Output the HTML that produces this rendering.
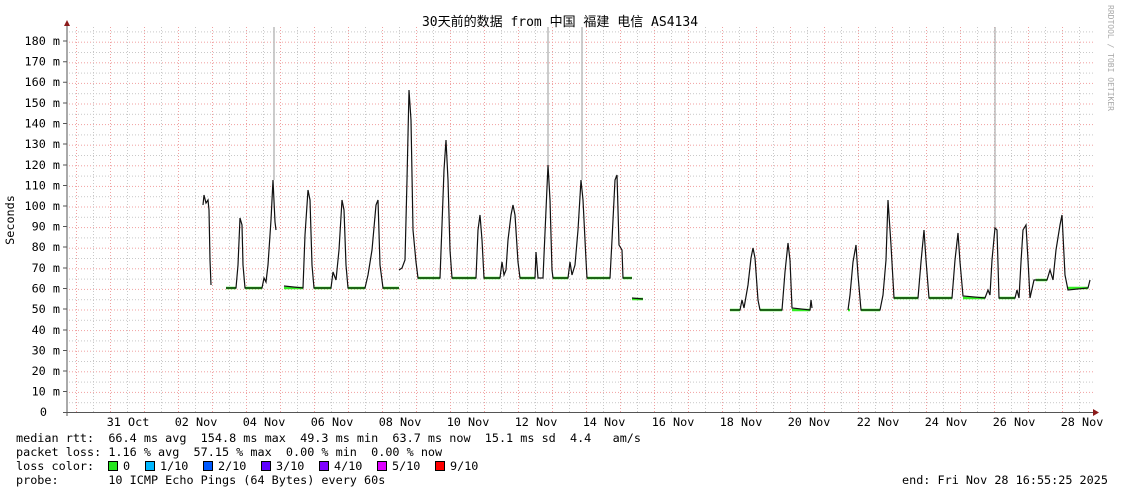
<!DOCTYPE html>
<html><head><meta charset="utf-8"><style>
body{margin:0;background:#fff;width:1121px;height:494px;overflow:hidden;position:relative;font-family:"DejaVu Sans Mono","Liberation Mono","Noto Sans CJK SC",monospace;font-size:11.8px;color:#000}
.t{position:absolute;white-space:pre;line-height:14px}
.b{position:absolute;width:8px;height:8px;border:1px solid #000}
</style></head><body>
<svg width="1121" height="494" style="position:absolute;left:0;top:0">
<defs>
<pattern id="vg" patternUnits="userSpaceOnUse" x="76" y="0" width="34" height="3">
<rect x="0" y="0" width="1" height="1" fill="#f0a0a0"/><rect x="17" y="0" width="1" height="1" fill="#c8c8c8"/></pattern>
<pattern id="hg" patternUnits="userSpaceOnUse" x="0" y="412.5" width="3" height="20.6">
<rect x="0" y="0" width="1" height="1" fill="#f0a0a0"/><rect x="0" y="10.3" width="1" height="1" fill="#c8c8c8"/></pattern>
</defs>
<rect x="68" y="27" width="1025" height="385" fill="url(#hg)"/>
<rect x="68" y="27" width="1025" height="385" fill="url(#vg)"/>
<g stroke="#bbb" stroke-width="1.5">
<line x1="274" y1="27" x2="274" y2="180"/><line x1="548" y1="27" x2="548" y2="165"/><line x1="582" y1="27" x2="582" y2="180"/><line x1="995" y1="27" x2="995" y2="228"/>
</g>
<g stroke="#33ee22" stroke-width="2.5">
<path d="M226,288H236M245,288H262M284,288H303M314,288H331M348,288H365M383,288H399M418,278H440M452,278H476M484,278H500M520,278H535M553,278H568M587,278H610M623,278H632M632,299H643M730,310H740M760,310H782M792,310H810M848,310H850M861,310H880M894,298H918M929,298H952M963,298H985M999,298H1015M1036,280H1047M1068,288H1088"/>
</g>
<g fill="none" stroke="#111" stroke-width="1.2">
<path d="M203,205 L204,195 L206,203 L208,200 L209,210 L210,260 L211,285"/>
<path d="M226,288 L236,288 L238,265 L240,218 L242,225 L243,265 L245,288 L262,288 L264,278 L266,282 L268,265 L271,220 L273,180 L275,222 L276,230"/>
<path d="M284,286 L303,288 L305,235 L308,190 L310,200 L312,265 L314,288 L331,288 L333,272 L336,280 L339,250 L342,200 L344,210 L346,265 L348,288 L365,288 L368,275 L372,250 L376,205 L378,200 L380,265 L383,288 L399,288"/>
<path d="M399,270 L402,268 L405,260 L407,180 L409,90 L411,120 L413,230 L416,262 L418,278 L440,278 L442,225 L444,170 L446,140 L448,180 L450,250 L452,278 L476,278 L478,230 L480,215 L482,240 L484,278 L500,278 L502,262 L504,275 L506,270 L508,240 L511,215 L513,205 L515,215 L518,262 L520,278 L535,278 L536,252 L538,278 L543,278 L546,210 L548,165 L550,200 L552,270 L553,278 L568,278 L570,262 L572,275 L575,265 L578,230 L581,180 L583,200 L586,260 L587,278 L610,278 L612,240 L615,180 L617,175 L619,245 L622,250 L623,278 L632,278"/>
<path d="M632,298 L643,299"/>
<path d="M730,310 L740,310 L742,300 L744,308 L748,285 L751,258 L753,248 L755,258 L758,300 L760,310 L782,310 L785,272 L788,243 L790,260 L792,308 L810,310 L811,300 L812,308"/>
<path d="M848,310 L850,295 L853,262 L856,245 L858,275 L861,310 L880,310 L883,295 L886,260 L888,200 L891,245 L894,298 L918,298 L921,262 L924,230 L926,260 L929,298 L952,298 L955,260 L958,233 L960,262 L963,296 L985,298 L988,290 L990,295 L992,260 L995,228 L997,230 L999,298 L1015,298 L1017,290 L1019,298 L1021,262 L1023,230 L1026,225 L1028,260 L1030,298 L1034,280 L1036,280 L1047,280 L1050,270 L1053,280 L1056,250 L1060,225 L1062,215 L1065,275 L1068,290 L1088,288 L1090,280"/>
</g>
<line x1="67" y1="24" x2="67" y2="416" stroke="#555" stroke-width="1"/>
<line x1="63" y1="412.5" x2="1094" y2="412.5" stroke="#555" stroke-width="1"/>
<polygon points="64,26 70,26 67,20" fill="#8b1a1a"/>
<polygon points="1093,409 1093,416 1099,412.5" fill="#8b1a1a"/>
<g stroke="#555"><path d="M63,41H67M63,61.7H67M63,82.3H67M63,103H67M63,123.5H67M63,144H67M63,165H67M63,185.5H67M63,206H67M63,226.5H67M63,247H67M63,268H67M63,288.5H67M63,309H67M63,330H67M63,350.5H67M63,371H67M63,391.5H67"/></g>
<text x="560" y="26" text-anchor="middle" font-family="DejaVu Sans Mono,Noto Sans CJK SC,monospace" font-size="13">30天前的数据 from 中国 福建 电信 AS4134</text>
<text transform="translate(14,220) rotate(-90)" text-anchor="middle" font-size="11.8" font-family="DejaVu Sans Mono,monospace">Seconds</text>
<text transform="translate(1108,5) rotate(90)" font-size="8" fill="#aaa" font-family="DejaVu Sans Mono,monospace">RRDTOOL / TOBI OETIKER</text>
<g font-size="11.8" font-family="DejaVu Sans Mono,monospace" text-anchor="middle">
<text x="128" y="426">31 Oct</text><text x="196" y="426">02 Nov</text><text x="264" y="426">04 Nov</text><text x="332" y="426">06 Nov</text><text x="400" y="426">08 Nov</text><text x="468" y="426">10 Nov</text><text x="536" y="426">12 Nov</text><text x="604" y="426">14 Nov</text><text x="673" y="426">16 Nov</text><text x="741" y="426">18 Nov</text><text x="809" y="426">20 Nov</text><text x="878" y="426">22 Nov</text><text x="946" y="426">24 Nov</text><text x="1014" y="426">26 Nov</text><text x="1082" y="426">28 Nov</text>
</g>
<g font-size="11.8" font-family="DejaVu Sans Mono,monospace" text-anchor="end">
<text x="47" y="416">0</text><text x="60" y="395.5">10 m</text><text x="60" y="375">20 m</text><text x="60" y="354.5">30 m</text><text x="60" y="334">40 m</text><text x="60" y="313">50 m</text><text x="60" y="292.5">60 m</text><text x="60" y="272">70 m</text><text x="60" y="251">80 m</text><text x="60" y="230.5">90 m</text><text x="60" y="210">100 m</text><text x="60" y="189.5">110 m</text><text x="60" y="169">120 m</text><text x="60" y="148">130 m</text><text x="60" y="127.5">140 m</text><text x="60" y="107">150 m</text><text x="60" y="86">160 m</text><text x="60" y="65.5">170 m</text><text x="60" y="45">180 m</text>
</g>
</svg>
<div class="t" style="left:16px;top:431px">median rtt:  66.4 ms avg  154.8 ms max  49.3 ms min  63.7 ms now  15.1 ms sd  4.4   am/s</div>
<div class="t" style="left:16px;top:445px">packet loss: 1.16 % avg  57.15 % max  0.00 % min  0.00 % now</div>
<div class="t" style="left:16px;top:459px">loss color:</div>
<div class="t" style="left:16px;top:473px">probe:       10 ICMP Echo Pings (64 Bytes) every 60s</div>
<div class="t" style="left:902px;top:473px">end: Fri Nov 28 16:55:25 2025</div>
<div class="b" style="left:108px;top:461px;background:#26e51f"></div><div class="t" style="left:123px;top:459px">0</div>
<div class="b" style="left:145px;top:461px;background:#00b8ff"></div><div class="t" style="left:160px;top:459px">1/10</div>
<div class="b" style="left:203px;top:461px;background:#0059ff"></div><div class="t" style="left:218px;top:459px">2/10</div>
<div class="b" style="left:261px;top:461px;background:#5e00ff"></div><div class="t" style="left:276px;top:459px">3/10</div>
<div class="b" style="left:319px;top:461px;background:#7e00ff"></div><div class="t" style="left:334px;top:459px">4/10</div>
<div class="b" style="left:377px;top:461px;background:#dd00ff"></div><div class="t" style="left:392px;top:459px">5/10</div>
<div class="b" style="left:435px;top:461px;background:#ff0000"></div><div class="t" style="left:450px;top:459px">9/10</div>
</body></html>
